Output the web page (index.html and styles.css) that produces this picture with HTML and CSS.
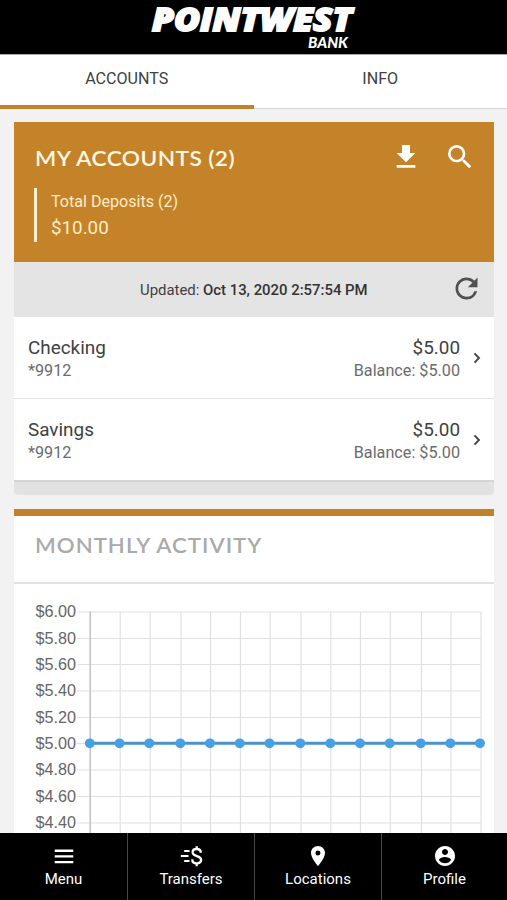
FILE: index.html
```html
<!DOCTYPE html>
<html lang="en">
<head>
<meta charset="utf-8">
<meta name="viewport" content="width=device-width">
<title>Pointwest Bank</title>
<link rel="stylesheet" href="styles.css">
</head>
<body>
<div class="app">
  <header class="brand">
    <svg class="logo" width="210" height="54" viewBox="150 0 210 54" role="img" aria-label="Pointwest Bank">
      <text class="logo-main" x="153" y="31.300" textLength="200" lengthAdjust="spacingAndGlyphs">POINTWEST</text>
      <text class="logo-sub" x="309" y="47.500" textLength="40" lengthAdjust="spacingAndGlyphs">BANK</text>
    </svg>
  </header>
  <nav class="tabs">
    <a class="tab active">ACCOUNTS</a>
    <a class="tab">INFO</a>
  </nav>
  <main class="content">
    <section class="card accounts">
      <div class="summary">
        <div class="summary-head">
          <h2 class="title">MY ACCOUNTS (2)</h2>
          <div class="actions">
            <svg width="32" height="32" viewBox="0 0 24 24"><path d="M19 9h-4V3H9v6H5l7 7 7-7zM5 18v2h14v-2H5z"/></svg>
            <svg width="32" height="32" viewBox="0 0 24 24"><path d="M15.5 14h-.79l-.28-.27A6.471 6.471 0 0 0 16 9.500 6.500 6.500 0 1 0 9.500 16c1.610 0 3.090-.59 4.230-1.570l.27.28v.79l5 4.990L20.490 19l-4.990-5zm-6 0C7.010 14 5 11.990 5 9.500S7.010 5 9.500 5 14 7.010 14 9.500 11.990 14 9.500 14z"/></svg>
          </div>
        </div>
        <div class="total">
          <span class="total-label">Total Deposits (2)</span>
          <span class="total-value">$10.00</span>
        </div>
      </div>
      <div class="updated">
        <p>Updated: <b>Oct 13, 2020 2:57:54 PM</b></p>
        <svg class="refresh" width="33" height="33" viewBox="0 0 24 24"><path d="M17.650 6.350A7.958 7.958 0 0 0 12 4c-4.420 0-7.990 3.580-7.990 8s3.570 8 7.990 8c3.730 0 6.840-2.550 7.730-6h-2.080A5.990 5.990 0 0 1 12 18c-3.310 0-6-2.690-6-6s2.690-6 6-6c1.660 0 3.140.69 4.220 1.780L13 11h7V4l-2.350 2.350z"/></svg>
      </div>
      <a class="row">
        <div class="col"><span class="name">Checking</span><span class="sub">*9912</span></div>
        <div class="col right"><span class="name">$5.00</span><span class="sub">Balance: $5.00</span></div>
        <svg class="chev" width="8" height="12" viewBox="0 0 8 12"><path d="M1.500 1.300 6 6 1.500 10.700"/></svg>
      </a>
      <a class="row">
        <div class="col"><span class="name">Savings</span><span class="sub">*9912</span></div>
        <div class="col right"><span class="name">$5.00</span><span class="sub">Balance: $5.00</span></div>
        <svg class="chev" width="8" height="12" viewBox="0 0 8 12"><path d="M1.500 1.300 6 6 1.500 10.700"/></svg>
      </a>
      <div class="card-foot"></div>
    </section>
    <section class="card activity">
      <div class="activity-head"><h2 class="title">MONTHLY ACTIVITY</h2></div>
      <svg class="chart" width="480" height="249" viewBox="14 584 480 249">
        <path class="grid" d="M77 612H481M77 638.500H481M77 664.500H481M77 691H481M77 717.500H481M77 743.500H481M77 770H481M77 796.500H481M77 823H481M120.200 612V833M150.200 612V833M181 612V833M210.500 612V833M240.500 612V833M270.200 612V833M301 612V833M330.800 612V833M360.500 612V833M390.300 612V833M421.500 612V833M451 612V833M481 612V833"/>
        <path class="axis" d="M90.200 611.500V833"/>
        <g class="ticks">
          <text x="76" y="617">$6.00</text><text x="76" y="643.500">$5.80</text><text x="76" y="670">$5.60</text>
          <text x="76" y="696.300">$5.40</text><text x="76" y="722.600">$5.20</text><text x="76" y="749">$5.00</text>
          <text x="76" y="775.400">$4.80</text><text x="76" y="801.700">$4.60</text><text x="76" y="828">$4.40</text>
        </g>
        <path class="series" d="M90 743.300H480"/>
        <g class="dots">
          <circle cx="89.800" cy="743.300" r="4.900"/><circle cx="119.500" cy="743.300" r="4.900"/><circle cx="149.300" cy="743.300" r="4.900"/><circle cx="180.300" cy="743.300" r="4.900"/><circle cx="210" cy="743.300" r="4.900"/><circle cx="239.700" cy="743.300" r="4.900"/><circle cx="269.500" cy="743.300" r="4.900"/><circle cx="300.300" cy="743.300" r="4.900"/><circle cx="330.300" cy="743.300" r="4.900"/><circle cx="360" cy="743.300" r="4.900"/><circle cx="389.700" cy="743.300" r="4.900"/><circle cx="420.700" cy="743.300" r="4.900"/><circle cx="450.300" cy="743.300" r="4.900"/><circle cx="480" cy="743.300" r="4.900"/>
        </g>
      </svg>
    </section>
  </main>
  <nav class="bottom">
    <a class="item"><svg width="24" height="24" viewBox="0 0 24 24"><path d="M2.700 5.500h18.600V8H2.700zM2.700 11.300h18.600v2.300H2.700zM2.700 17h18.600v2.300H2.700z"/></svg><span>Menu</span></a>
    <a class="item"><svg width="24" height="24" viewBox="0 0 24 24"><path d="M5.200 6.100h5.300V8H5.200zM1.800 11h7.700v1.900H1.800zM5.200 16h5.300v1.900H5.200z"/><path class="line" d="M21.800 8.800C21.800 6.500 20.200 5 17.700 5S13.600 6.400 13.600 8.300c0 5 8.500 2.500 8.500 7.400 0 2.200-1.700 3.600-4.400 3.600s-4.500-1.600-4.500-4.100M17.700 2.200V5M17.700 19.300v2.900"/></svg><span>Transfers</span></a>
    <a class="item"><svg width="24" height="24" viewBox="0 0 24 24"><path d="M12 2C8.130 2 5 5.130 5 9c0 5.250 7 13 7 13s7-7.750 7-13c0-3.870-3.130-7-7-7zm0 9.500A2.500 2.500 0 1 1 12 6.500a2.500 2.500 0 0 1 0 5z"/></svg><span>Locations</span></a>
    <a class="item"><svg width="24" height="24" viewBox="0 0 24 24"><path d="M12 2C6.480 2 2 6.480 2 12s4.480 10 10 10 10-4.480 10-10S17.520 2 12 2zm0 3c1.660 0 3 1.340 3 3s-1.340 3-3 3-3-1.340-3-3 1.340-3 3-3zm0 14.200a7.200 7.200 0 0 1-6-3.220c.03-1.990 4-3.080 6-3.080 1.990 0 5.970 1.090 6 3.080a7.200 7.200 0 0 1-6 3.220z"/></svg><span>Profile</span></a>
  </nav>
</div>
</body>
</html>
```
FILE: styles.css
```css
* { box-sizing: border-box; }
body { margin: 0; font-family: Roboto, "Liberation Sans", sans-serif; color: #414141; background: #f2f2f2; }
h2, p { margin: 0; }
.app { width: 507px; height: 900px; display: flex; flex-direction: column; overflow: hidden; }

.brand { height: 54px; flex: none; background: #000; display: flex; justify-content: center; }
.logo { display: block; }
.logo text { fill: #fff; stroke: #fff; }
.logo-main { font: italic 800 31px "Open Sans", sans-serif; stroke-width: 1.8px; }
.logo-sub { font: italic 900 14.5px Lato, sans-serif; stroke-width: 0; }

.tabs { height: 55px; flex: none; display: flex; background: #fff; border-top: 1px solid #aaa; }
.tab { width: 254px; height: 54px; font-size: 16.1px; line-height: 48px; text-align: center; border-bottom: 1px solid #d5d5d5; }
.tab.active { border-bottom: 4px solid #c1832a; }

.content { flex: 1; min-height: 0; overflow: hidden; padding: 13px 13px 0 14px; display: flex; flex-direction: column; gap: 14px; }
.card { flex: none; background: #fff; }
.accounts { height: 373px; border-radius: 0 0 4px 4px; overflow: hidden; }
.title { font: 600 21.500px/26px Lato, sans-serif; white-space: nowrap; transform-origin: left center; }
.summary { height: 140px; background: #c48329; color: #fff7e4; padding: 19px 18px 0 20px; }
.summary-head { display: flex; justify-content: space-between; align-items: center; height: 32px; }
.summary .title { letter-spacing: .4px; transform: translate(1px, 1px) scaleX(1.055); }
.actions { display: flex; gap: 22px; fill: #fff; }
.actions svg { display: block; }
.total { margin-top: 15px; height: 54px; border-left: 3px solid #fff0d2; padding: 1px 0 0 14px; display: flex; flex-direction: column; color: #ffebc5; }
.total-label { font-size: 16.1px; line-height: 25px; }
.total-value { font-size: 18.8px; line-height: 28px; }

.updated { height: 55px; background: #e4e4e4; display: flex; align-items: center; padding: 0 11px 0 126px; justify-content: space-between; font-size: 14.9px; }
.updated b { font-weight: 500; color: #333; }
.refresh { fill: #505050; margin-top: -2px; }
.row { height: 82px; display: flex; align-items: flex-start; padding: 18px 13px 0 14px; border-bottom: 1px solid #e2e2e2; }
.row + .row { height: 83px; border-bottom: 2px solid #d5d5d5; }
.col { display: flex; flex-direction: column; }
.right { margin-left: auto; text-align: right; }
.name { font-size: 18.9px; line-height: 26px; }
.sub { font-size: 16.2px; line-height: 20px; color: #6b6b6b; }
.chev { margin: 17px 0 0 13px; fill: none; stroke: #444; stroke-width: 1.9; }
.card-foot { height: 13px; background: #e2e2e2; }

.activity { border-top: 7px solid #c1832a; }
.activity-head { height: 68px; border-bottom: 2px solid #e1e1e1; padding: 16px 0 0 21px; }
.activity .title { color: #aaa; letter-spacing: 1px; transform: scaleX(1.03); }
.chart { display: block; }
.grid { fill: none; stroke: #000; stroke-opacity: .12; stroke-width: 1.2; }
.axis { stroke: #bdbdbd; stroke-width: 1.4; }
.ticks text { font: 16.200px "Liberation Sans", sans-serif; fill: #666; text-anchor: end; }
.series { stroke: #4b91cb; stroke-width: 3; }
.dots { fill: #45a0e4; }

.bottom { height: 67px; flex: none; display: grid; grid-template-columns: 128px 127px 127px 125px; background: #000; color: #fff; }
.item { display: flex; flex-direction: column; align-items: center; padding-top: 11px; border-right: 1px solid #454545; font-size: 15px; line-height: 22px; }
.item:last-child { border: 0; }
.item svg { display: block; fill: #fff; }
.item .line { fill: none; stroke: #fff; stroke-width: 2.300; }
```
